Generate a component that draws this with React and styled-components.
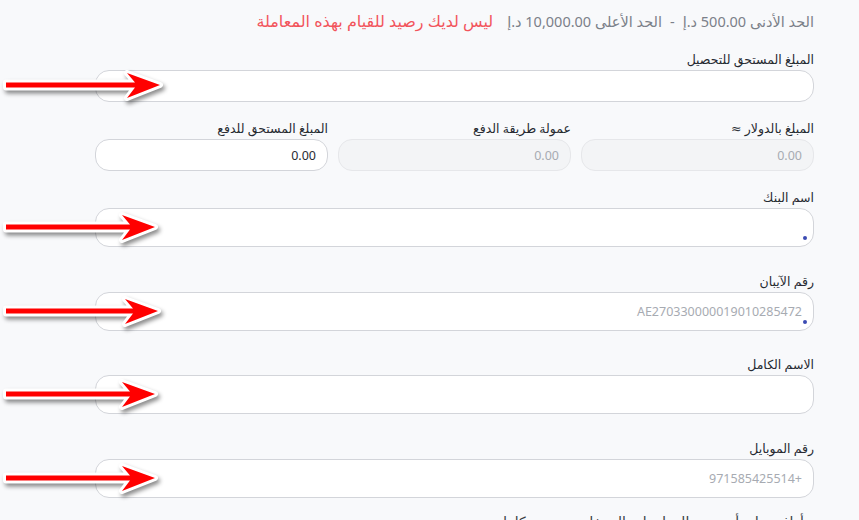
import React from 'react';
import styled, { createGlobalStyle } from 'styled-components';

const GlobalStyle = createGlobalStyle`
  html, body {
    margin: 0;
    padding: 0;
    background: #f8f9fb;
  }
  body {
    font-family: "Noto Sans", "DejaVu Sans", sans-serif;
    overflow: hidden;
  }
`;

const Page = styled.div`
  position: relative;
  width: 859px;
  height: 520px;
  overflow: hidden;
  box-sizing: border-box;
  padding: 12px 45px 0 95px;
`;

const Form = styled.div`
  direction: rtl;
  display: flex;
  flex-direction: column;
`;

const Limits = styled.div`
  display: flex;
  align-items: center;
  gap: 8px;
  font-size: 14.5px;
  line-height: 18px;
  color: #7b8089;
  margin-bottom: 22px;
`;

const Warning = styled.span`
  color: #f2545b;
  font-size: 16px;
  margin-right: 6px;
`;

const Field = styled.div`
  display: flex;
  flex-direction: column;
  margin-bottom: ${(p) => p.$space || 19}px;
  min-width: 0;
`;

const Label = styled.label`
  font-size: 12.5px;
  line-height: 16px;
  color: #262a31;
  margin-bottom: 2px;
`;

const Box = styled.div`
  position: relative;
  box-sizing: border-box;
  height: ${(p) => (p.$tall ? 39 : 32)}px;
  border: 1px solid ${(p) => (p.$disabled ? '#e6e7ea' : '#d3d5da')};
  border-radius: 14px;
  background: ${(p) => (p.$disabled ? '#f3f4f6' : '#ffffff')};
  display: flex;
  align-items: center;
  padding: 0 11px;
  font-size: 12.5px;
  color: ${(p) => (p.$muted ? '#a7abb2' : '#2a2d33')};
`;

const Dot = styled.span`
  position: absolute;
  right: 6px;
  bottom: 6px;
  width: 4px;
  height: 4px;
  border-radius: 50%;
  background: #3b4bb3;
`;

const Row = styled.div`
  display: grid;
  grid-template-columns: repeat(3, 1fr);
  gap: 10px;
  margin-bottom: 19px;
`;

const RowField = styled(Field)`
  margin-bottom: 0;
`;

const Footer = styled.div`
  font-size: 14px;
  line-height: 16px;
  color: #3a3e45;
  padding-right: 10px;
`;

const ArrowSvg = styled.svg`
  position: absolute;
  left: 0;
  top: ${(p) => p.$y - 20}px;
  filter: drop-shadow(2px 3px 2px rgba(0, 0, 0, 0.45));
  overflow: visible;
`;

const Arrow = ({ y, tip = 156 }) => {
  const c = 20;
  const back = tip - 33;
  const d = `M6,${c - 2.5} L${back + 8},${c - 2.5} L${back},${c - 12} L${tip},${c} L${back},${c + 13} L${back + 8},${c + 2.5} L6,${c + 2.5} Z`;
  return (
    <ArrowSvg $y={y} width="170" height="40" viewBox="0 0 170 40">
      <path
        d={d}
        fill="#ff0000"
        stroke="#ffffff"
        strokeWidth="6"
        strokeLinejoin="round"
        paintOrder="stroke"
      />
    </ArrowSvg>
  );
};

const App = () => (
  <>
    <GlobalStyle />
    <Page>
      <Form>
        <Limits>
          <span>الحد الأدنى 500.00 د.إ</span>
          <span>-</span>
          <span>الحد الأعلى 10,000.00 د.إ</span>
          <Warning>ليس لديك رصيد للقيام بهذه المعاملة</Warning>
        </Limits>

        <Field>
          <Label>المبلغ المستحق للتحصيل</Label>
          <Box />
        </Field>

        <Row>
          <RowField>
            <Label>المبلغ بالدولار ≈</Label>
            <Box $disabled $muted>0.00</Box>
          </RowField>
          <RowField>
            <Label>عمولة طريقة الدفع</Label>
            <Box $disabled $muted>0.00</Box>
          </RowField>
          <RowField>
            <Label>المبلغ المستحق للدفع</Label>
            <Box>0.00</Box>
          </RowField>
        </Row>

        <Field $space={27}>
          <Label>اسم البنك</Label>
          <Box $tall>
            <Dot />
          </Box>
        </Field>

        <Field $space={26}>
          <Label>رقم الآيبان</Label>
          <Box $tall $muted>
            AE270330000019010285472
            <Dot />
          </Box>
        </Field>

        <Field $space={27}>
          <Label>الاسم الكامل</Label>
          <Box $tall />
        </Field>

        <Field $space={16}>
          <Label>رقم الموبايل</Label>
          <Box $tall $muted>+971585425514</Box>
        </Field>

        <Footer>أوافق على أن جميع المعلومات المدخلة صحيحة وكاملة</Footer>
      </Form>

      <Arrow y={85} tip={160} />
      <Arrow y={227} tip={155} />
      <Arrow y={311} tip={158} />
      <Arrow y={394} tip={155} />
      <Arrow y={478} tip={155} />
    </Page>
  </>
);

export default App;
